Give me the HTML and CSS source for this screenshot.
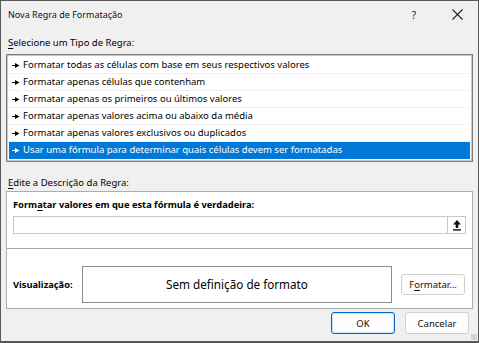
FILE: index.html
```html
<!DOCTYPE html>
<html lang="pt-BR">
<head>
  <meta charset="UTF-8" />
  <title>Nova Regra de Formatação</title>
  <link rel="stylesheet" href="styles.css">
</head>
<body>

<div class="dialog">
  <div class="titlebar">
    <span class="title">Nova Regra de Formatação</span>
    <span class="help">?</span>
    <svg class="close" width="11" height="11" viewBox="0 0 11 11">
      <path d="M0.5 0.5 L10.5 10.5 M10.5 0.5 L0.5 10.5" stroke="#222" stroke-width="1.1" fill="none" />
    </svg>
  </div>

  <div class="content">
    <div class="label"><u>S</u>elecione um Tipo de Regra:</div>
    <ul class="rules">
      <li><svg class="arrow" width="8" height="5" viewBox="0 0 8 5"><path d="M0 2 H3 V0 L7.5 2.5 L3 5 V3 H0 Z" fill="currentColor" /></svg>Formatar todas as células com base em seus respectivos valores</li>
      <li><svg class="arrow" width="8" height="5" viewBox="0 0 8 5"><path d="M0 2 H3 V0 L7.5 2.5 L3 5 V3 H0 Z" fill="currentColor" /></svg>Formatar apenas células que contenham</li>
      <li><svg class="arrow" width="8" height="5" viewBox="0 0 8 5"><path d="M0 2 H3 V0 L7.5 2.5 L3 5 V3 H0 Z" fill="currentColor" /></svg>Formatar apenas os primeiros ou últimos valores</li>
      <li><svg class="arrow" width="8" height="5" viewBox="0 0 8 5"><path d="M0 2 H3 V0 L7.5 2.5 L3 5 V3 H0 Z" fill="currentColor" /></svg>Formatar apenas valores acima ou abaixo da média</li>
      <li><svg class="arrow" width="8" height="5" viewBox="0 0 8 5"><path d="M0 2 H3 V0 L7.5 2.5 L3 5 V3 H0 Z" fill="currentColor" /></svg>Formatar apenas valores exclusivos ou duplicados</li>
      <li class="selected"><svg class="arrow" width="8" height="5" viewBox="0 0 8 5"><path d="M0 2 H3 V0 L7.5 2.5 L3 5 V3 H0 Z" fill="currentColor" /></svg>Usar uma fórmula para determinar quais células devem ser formatadas</li>
    </ul>

    <div class="label label-desc"><u>E</u>dite a Descrição da Regra:</div>
    <div class="desc">
      <div class="desc-top">
        <div class="desc-title">Form<u>a</u>tar valores em que esta fórmula é verdadeira:</div>
        <div class="formula">
          <div class="formula-input"></div>
          <div class="formula-btn">
            <svg width="10" height="12" viewBox="0 0 10 12">
              <path d="M5 1 L9 5.5 L6.3 5.5 L6.3 9 L3.7 9 L3.7 5.5 L1 5.5 Z" fill="#111" />
              <rect x="1" y="10.2" width="8" height="1.4" fill="#111" />
            </svg>
          </div>
        </div>
      </div>
      <div class="desc-bottom">
        <span class="preview-label">Visualização:</span>
        <div class="preview">Sem definição de formato</div>
        <button class="btn btn-format">F<u>o</u>rmatar...</button>
      </div>
    </div>

    <div class="actions">
      <button class="btn btn-ok">OK</button>
      <button class="btn">Cancelar</button>
    </div>
  </div>
  <div class="grip"></div>
</div>

</body>
</html>
```

FILE: styles.css
```css
* {
  margin: 0; padding: 0; box-sizing: border-box;
}
body {
  background: #f0f0f0;
  font-family: 'Noto Sans', 'Open Sans', sans-serif;
  font-size: 9.5px;
  color: #000;
}
u {
  text-decoration-thickness: 1px;
  text-underline-offset: 2px;
}
.dialog {
  width: 479px;
  height: 343px;
  border: 1px solid #595959;
  border-bottom-width: 2px;
  background: #f0f0f0;
  position: relative;
}
.titlebar {
  height: 27px;
  display: flex;
  align-items: center;
  padding-left: 7px;
}
.title {
  font-size: 9px;
  flex: 1;
  color: #111;
}
.help {
  font-size: 10px;
  margin-right: 36px;
  color: #222;
}
.close {
  margin-right: 15px;
}
.content {
  padding: 0 5px;
}
.label {
  height: 16px;
  line-height: 16px;
  margin-top: 7px;
  padding-left: 2px;
  color: #000;
}
.rules {
  list-style: none;
  margin-top: 3px;
  height: 108px;
  background: #fff;
  border: 1px solid #7a7a7a;
  box-shadow: inset 0 0 0 1px #c8c8c8;
  padding: 2px 2px;
}
.rules li {
  height: 17px;
  line-height: 16px;
  padding-left: 3px;
  color: #000;
  border-bottom: 1px solid #f0f0f0;
  white-space: nowrap;
}
.rules li.selected {
  background: #0078d7;
  color: #fff;
  border-bottom-color: #0078d7;
}
.arrow {
  margin-right: 3px;
  vertical-align: 0;
}
.label-desc {
  margin-top: 13px;
}
.desc {
  height: 118px;
  background: #fff;
  border: 1px solid #adadad;
}
.desc-top {
  height: 57px;
  padding: 6px 6px 0;
  border-bottom: 1px solid #a8a8a8;
}
.desc-title {
  font-weight: bold;
  font-size: 9.3px;
  line-height: 14px;
}
.formula {
  display: flex;
  margin-top: 4px;
  height: 18px;
  width: 453px;
}
.formula-input {
  flex: 1;
  border: 1px solid #c8c8c8;
}
.formula-btn {
  width: 18px;
  border: 1px solid #c8c8c8;
  border-left: none;
  display: flex;
  align-items: center;
  justify-content: center;
}
.desc-bottom {
  height: 58px;
  display: flex;
  align-items: center;
  padding: 12px 7px 0 6px;
}
.preview-label {
  font-weight: bold;
  font-size: 9.3px;
  width: 69px;
}
.preview {
  width: 310px;
  height: 37px;
  border: 1px solid #8c8c8c;
  display: flex;
  align-items: center;
  justify-content: center;
  font-size: 11.7px;
}
.btn {
  font-family: inherit;
  font-size: 9.5px;
  width: 64px;
  height: 22px;
  background: #fdfdfd;
  border: 1px solid #d0d0d0;
  border-radius: 3px;
  color: #111;
}
.btn-format {
  margin-left: 9px;
  height: 21px;
}
.actions {
  display: flex;
  justify-content: flex-end;
  gap: 10px;
  margin-top: 3px;
  padding-right: 4px;
}
.btn-ok {
  border: 1px solid #0067c0;
  box-shadow: inset 0 0 0 1px #cfe3f7;
}
.grip {
  position: absolute;
  right: 1px;
  bottom: 1px;
  width: 6px;
  height: 6px;
  background: radial-gradient(circle, #b0b0b0 0.6px, transparent 0.8px) 0 0 / 2px 2px;
}
```
